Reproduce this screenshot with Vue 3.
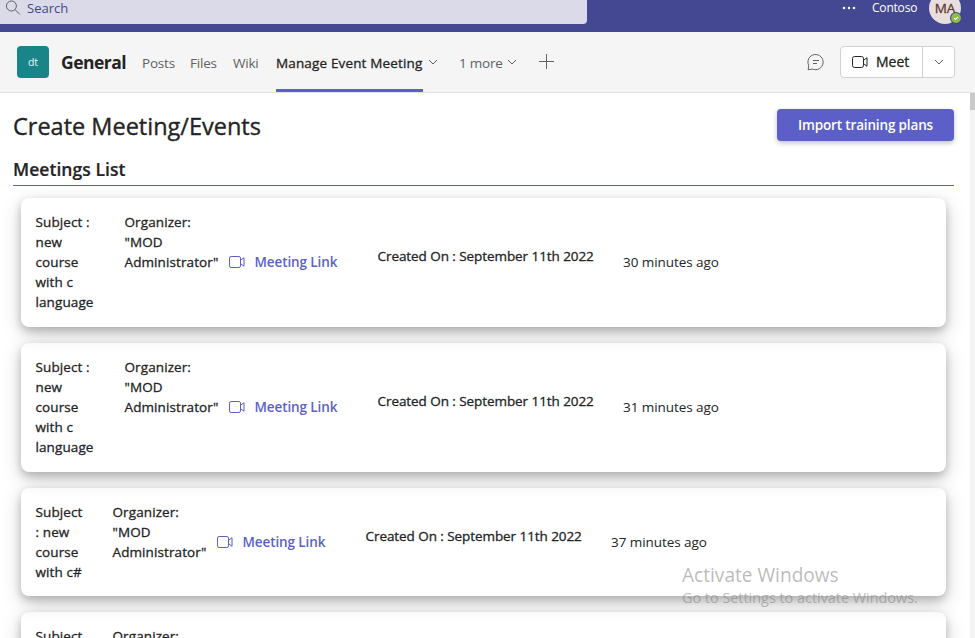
<script setup>
const meetings = [
  { subject: ['Subject :', 'new', 'course', 'with c', 'language'], ago: '30 minutes ago', compact: false },
  { subject: ['Subject :', 'new', 'course', 'with c', 'language'], ago: '31 minutes ago', compact: false },
  { subject: ['Subject', ': new', 'course', 'with c#'], ago: '37 minutes ago', compact: true },
  { subject: ['Subject'], compact: true, partial: true }
]
</script>

<template>
  <div class="app">
    <header class="titlebar">
      <div class="search">
        <svg class="search-icon" width="16" height="16" viewBox="0 0 16 16"><circle cx="5.4" cy="6" r="5" /><path d="M9 9.6l4.8 4.8" /></svg>
        <span class="search-text">Search</span>
      </div>
      <div class="account">
        <svg class="dots" width="14" height="4" viewBox="0 0 14 4"><circle cx="2" cy="2" r="1.25" /><circle cx="7" cy="2" r="1.25" /><circle cx="12" cy="2" r="1.25" /></svg>
        <span class="org">Contoso</span>
        <div class="avatar">
          <span class="initials">MA</span>
          <svg class="presence" width="12" height="12" viewBox="0 0 12 12"><circle class="ring" cx="6" cy="6" r="6" /><circle class="dot" cx="6" cy="6" r="4.9" /><path d="M4 6.2l1.4 1.3L8 4.9" /></svg>
        </div>
      </div>
    </header>

    <nav class="channel">
      <div class="team">dt</div>
      <h1 class="general">General</h1>
      <span class="tab posts">Posts</span>
      <span class="tab files">Files</span>
      <span class="tab wiki">Wiki</span>
      <span class="tab active">Manage Event Meeting</span>
      <svg class="chevron" width="10" height="6" viewBox="0 0 10 6"><path d="M1 1l4 4 4-4" /></svg>
      <span class="tab more">1 more</span>
      <svg class="chevron" width="10" height="6" viewBox="0 0 10 6"><path d="M1 1l4 4 4-4" /></svg>
      <svg class="plus" width="16" height="16" viewBox="0 0 16 16"><path d="M7.5 0v15M0 7.5h15" /></svg>
      <div class="spacer"></div>
      <svg class="chat" width="18" height="18" viewBox="0 0 18 18"><path d="M1.7 12.4A7.6 7.6 0 1 1 5.4 16L1.2 16.8z" /><path d="M6 7.5h6M6 10.5h4" /></svg>
      <div class="meet">
        <div class="meet-main">
          <svg class="camera dark" width="18" height="14" viewBox="0 0 18 14"><rect x="1.5" y="1.5" width="11" height="11" rx="2" /><path d="M12.5 5.4l3.5-2.7v8.6l-3.5-2.7" /></svg>
          <span class="meet-text">Meet</span>
        </div>
        <div class="meet-drop"><svg class="chevron" width="10" height="6" viewBox="0 0 10 6"><path d="M1 1l4 4 4-4" /></svg></div>
      </div>
    </nav>

    <div class="body">
      <main class="content">
        <div class="heading">
          <h2 class="page-title">Create Meeting/Events</h2>
          <button class="import"><span>Import training plans</span></button>
        </div>
        <h3 class="list-title"><span>Meetings List</span></h3>
        <section class="cards">
          <article v-for="(m, i) in meetings" :key="i" class="card" :class="{ compact: m.compact }">
            <div class="subject"><div v-for="line in m.subject" :key="line">{{ line }}</div></div>
            <div class="organizer">
              <div>Organizer:</div>
              <template v-if="!m.partial"><div>"MOD</div><div>Administrator"</div></template>
            </div>
            <template v-if="!m.partial">
              <svg class="camera link-icon" width="18" height="14" viewBox="0 0 18 14"><rect x="1.5" y="1.5" width="11" height="11" rx="1.6" /><path d="M12.5 5.4l3.5-2.7v8.6l-3.5-2.7" /></svg>
              <a class="link">Meeting Link</a>
              <div class="created">Created On : September 11th 2022</div>
              <div class="ago">{{ m.ago }}</div>
            </template>
          </article>
        </section>
      </main>
      <div class="scrollbar"><div class="thumb"></div></div>
    </div>

    <div class="watermark">
      <div class="wm-title">Activate Windows</div>
      <div class="wm-text">Go to Settings to activate Windows.</div>
    </div>
  </div>
</template>

<style>
body { margin: 0; overflow: hidden; }
</style>

<style scoped>
.app {
  position: relative;
  width: 975px;
  height: 638px;
  display: flex;
  flex-direction: column;
  overflow: hidden;
  background: #fff;
  color: #242424;
  font: 13.5px/20px "Open Sans", "Noto Sans", sans-serif;
  white-space: nowrap;
}
h1, h2, h3 { margin: 0; }
svg { flex: none; fill: none; stroke: #616161; stroke-width: 1; }

.titlebar { height: 32px; flex: none; display: flex; justify-content: space-between; background: #444791; }
.search {
  width: 587px; height: 24px; box-sizing: border-box; padding: 0 0 0 6px;
  display: flex; gap: 5px; background: #dadae8; border-radius: 0 0 4px 0;
}
.search-text { color: #444791; margin-top: -2px; font-size: 13px; }
.account { display: flex; padding-right: 14px; }
.dots { margin: 6px 16px 0 0; fill: #fff; stroke: none; }
.org { width: 57px; margin-top: -2px; font-size: 12px; letter-spacing: -.2px; color: #fff; }
.avatar { position: relative; width: 32px; height: 32px; margin-top: -8px; border-radius: 50%; background: #e8dedb; text-align: center; }
.initials { display: block; margin-top: 6px; font-size: 13.5px; color: #593a33; -webkit-text-stroke: .3px #593a33; }
.presence { position: absolute; right: -1px; bottom: 0; stroke: none; }
.presence .ring { fill: #444791; }
.presence .dot { fill: #8cbd45; }
.presence path { stroke: #fff; stroke-width: 1.1; }

.channel {
  height: 61px; flex: none; box-sizing: border-box; display: flex; align-items: center;
  padding: 0 20px 0 17px; background: #f5f5f5; border-bottom: 1px solid #e3e3e3;
}
.team {
  width: 32px; height: 32px; border-radius: 4px; background: #1a8588; color: #e6f6f6;
  text-align: center; font-size: 10.5px; line-height: 33px;
}
.general { width: 81px; margin: -1px 0 0 12px; font-size: 17.5px; font-weight: 700; letter-spacing: -.5px; line-height: 24px; }
.tab { color: #616161; line-height: 22px; padding-top: 2px; font-size: 13.5px; letter-spacing: -.2px; }
.posts { width: 48px; }
.files { width: 43px; }
.wiki { width: 43px; }
.active {
  width: 147px; height: 60px; box-sizing: border-box; padding-top: 20px;
  border-bottom: 3px solid #5b5fc7; color: #242424; letter-spacing: .15px; -webkit-text-stroke: .3px #242424;
}
.chevron { margin-left: 5px; }
.more { width: 43px; margin-left: 21px; }
.plus { margin-left: 22px; }
.spacer { flex: 1; }
.chat { margin-right: 15px; }
.meet { width: 115px; height: 32px; box-sizing: border-box; display: flex; background: #fff; border: 1px solid #d1d1d1; border-radius: 4px; }
.meet-main { width: 82px; display: flex; align-items: center; padding-left: 10px; box-sizing: border-box; border-right: 1px solid #d1d1d1; }
.camera.dark { stroke: #242424; }
.meet-text { margin-left: 7px; font-size: 14px; -webkit-text-stroke: .3px #242424; }
.meet-drop { flex: 1; display: flex; align-items: center; justify-content: center; }
.meet-drop .chevron { margin: 0; }

.body { flex: 1; min-height: 0; display: flex; overflow: hidden; }
.content { width: 970px; box-sizing: border-box; padding: 16px 16px 0 13px; }
.heading { display: flex; justify-content: space-between; height: 32px; }
.page-title { font-size: 23.5px; font-weight: 400; line-height: 34px; letter-spacing: 0; -webkit-text-stroke: .35px #242424; }
.import {
  width: 177px; height: 32px; padding: 0; border: 0; border-radius: 4px; background: #5b5fc7; color: #fff;
  font: 600 13.5px/32px "Open Sans", sans-serif; letter-spacing: -.15px; box-shadow: 0 2px 5px rgba(0, 0, 0, .25);
}
.list-title { height: 44px; margin-bottom: 12px; border-bottom: 1px solid #5b5fc7; font-size: 17.5px; font-weight: 600; line-height: 57px; letter-spacing: .05px; -webkit-text-stroke: .2px #242424; }
.cards { display: flex; flex-direction: column; gap: 16px; padding: 0 8px; }
.card {
  height: 129px; flex: none; box-sizing: border-box; display: flex; align-items: center; padding: 0 15px 1px 14.5px;
  border-radius: 8px; -webkit-text-stroke: .3px #242424;
  box-shadow: 0 4px 8px 0 rgba(0, 0, 0, .2), 0 6px 20px 0 rgba(0, 0, 0, .19);
}
.card.compact { height: 108px; padding-bottom: 0; }
.subject, .organizer { align-self: flex-start; margin-top: 14px; }
.subject { width: 89px; letter-spacing: .1px; }
.compact .subject { width: 77px; }
.organizer { width: 103px; letter-spacing: .1px; }
.link-icon { stroke: #5b5fc7; }
.link { width: 123px; margin-left: 9px; color: #5b5fc7; font-weight: 600; letter-spacing: -.1px; -webkit-text-stroke: 0; }
.created { width: 245.5px; margin-top: -12px; letter-spacing: -.07px; }
.ago { letter-spacing: -.07px; -webkit-text-stroke: 0; }
.scrollbar { width: 5px; background: #f3f3f3; }
.thumb { height: 17px; background: #c9c9c9; }

.watermark { position: absolute; left: 682px; top: 563px; color: rgba(120, 120, 120, .5); }
.wm-title { font-size: 19.1px; line-height: 24px; }
.wm-text { font-size: 14.4px; line-height: 21px; }
</style>
